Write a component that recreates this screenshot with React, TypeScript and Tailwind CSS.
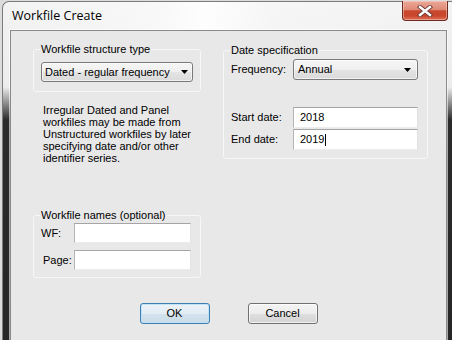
import React from "react";

function Select({ label, className = "" }: { label: string; className?: string }) {
  return (
    <div
      className={`flex items-center border border-[#7a7a7a] rounded-[3px] bg-[linear-gradient(to_bottom,#f6f6f6_0%,#efefef_50%,#e4e4e4_51%,#dadada_100%)] shadow-[inset_0_0_0_1px_rgba(255,255,255,0.6)] ${className}`}
    >
      <span className="flex-1 truncate">{label}</span>
      <svg width="7" height="4" viewBox="0 0 7 4" className="shrink-0">
        <path d="M0 0H7L3.5 4Z" fill="#000" />
      </svg>
    </div>
  );
}

function TextBox({ value, caret = false, className = "" }: { value?: string; caret?: boolean; className?: string }) {
  return (
    <div
      className={`flex items-center bg-white border-t border-l border-t-[#a5a5a5] border-l-[#b5b5b5] border-r border-b border-r-[#e2e2e2] border-b-[#ececec] ${className}`}
    >
      {value && <span>{value}</span>}
      {caret && <span className="inline-block w-[1px] h-[12px] bg-black ml-[1px]" />}
    </div>
  );
}

export default function App() {
  return (
    <div className="w-[452px] h-[340px] overflow-hidden bg-[#dcdcdc] pl-[2px] pt-[1px] font-['Liberation_Sans',Arial,sans-serif] text-[11px] text-black">
      <div className="w-[460px] h-[340px] border-l border-t border-[#7c7c7c] rounded-tl-[7px] bg-[linear-gradient(to_bottom,#f3f3f3_0px,#ececec_85px,#2b2b2b_118px,#262626_100%)] flex flex-col">
        {/* Title bar */}
        <div className="h-[28px] flex items-center pl-[9px] bg-[linear-gradient(to_right,rgba(255,255,255,0)_0%,rgba(255,255,255,0.5)_35%,rgba(255,255,255,0.9)_45%,rgba(255,255,255,0.3)_60%,rgba(255,255,255,0)_100%)] w-[449px]">
          <span className="font-['Open_Sans',sans-serif] text-[12.5px] text-black">Workfile Create</span>
          <div className="ml-auto mr-[4px] self-start -mt-[1px] w-[46px] h-[20px] rounded-b-[4px] border border-t-0 border-[#6d2a20] bg-[linear-gradient(to_bottom,#eba898_0%,#df8a76_45%,#c8472e_52%,#c9472d_78%,#e07158_100%)] shadow-[inset_0_0_0_1px_rgba(255,220,210,0.45)] flex items-center justify-center">
            <svg width="16" height="12" viewBox="0 0 16 12">
              <path d="M3 2L13 10M13 2L3 10" stroke="#6a3a33" strokeWidth="4.2" strokeLinecap="square" />
              <path d="M3 2L13 10M13 2L3 10" stroke="#ffffff" strokeWidth="2.4" strokeLinecap="square" />
            </svg>
          </div>
        </div>

        {/* Client area */}
        <div className="ml-[7px] w-[437px] flex-1 bg-[#e8e8e8] border border-[#8a8a8a] shadow-[0_0_0_1px_rgba(255,255,255,0.6)] flex flex-col">
          <div className="flex pl-[22px] pt-[11px] gap-[22px]">
            {/* Left column */}
            <div className="w-[168px] flex flex-col">
              <fieldset className="border border-[#f7f7f7] rounded-[3px] px-[7px] pb-[9px] shadow-none">
                <legend className="leading-[14px] px-[1px] -ml-[1px]">Workfile structure type</legend>
                <Select label="Dated - regular frequency" className="mt-[6px] h-[20px] pl-[3px] pr-[4px]" />
              </fieldset>

              <p className="mt-[12px] pl-[10px] leading-[12px]">
                Irregular Dated and Panel
                <br />
                workfiles may be made from
                <br />
                Unstructured workfiles by later
                <br />
                specifying date and/or other
                <br />
                identifier series.
              </p>

              <fieldset className="mt-[44px] border border-[#f7f7f7] rounded-[3px] px-[7px] pb-[7px]">
                <legend className="leading-[14px] px-[1px] -ml-[1px]">Workfile names (optional)</legend>
                <div className="mt-[1px] flex items-center">
                  <span className="w-[33px]">WF:</span>
                  <TextBox className="w-[117px] h-[20px]" />
                </div>
                <div className="mt-[7px] flex items-center">
                  <span className="w-[33px] pl-[2px]">Page:</span>
                  <TextBox className="w-[117px] h-[20px]" />
                </div>
              </fieldset>
            </div>

            {/* Right column */}
            <div className="w-[205px] mt-[1px]">
              <fieldset className="border border-[#f7f7f7] rounded-[3px] px-[7px] pb-[8px]">
                <legend className="leading-[14px] px-[1px] -ml-[1px]">Date specification</legend>
                <div className="mt-[2px] flex items-center">
                  <span className="w-[62px]">Frequency:</span>
                  <Select label="Annual" className="w-[125px] h-[21px] pl-[4px] pr-[6px]" />
                </div>
                <div className="mt-[27px] flex items-center">
                  <span className="w-[62px]">Start date:</span>
                  <TextBox value="2018" className="w-[125px] h-[21px] pl-[6px]" />
                </div>
                <div className="mt-[1px] flex items-center">
                  <span className="w-[62px]">End date:</span>
                  <TextBox value="2019" caret className="w-[125px] h-[21px] pl-[6px]" />
                </div>
              </fieldset>
            </div>
          </div>

          {/* Buttons */}
          <div className="mt-[25px] flex justify-center gap-[38px]">
            <div className="w-[70px] h-[21px] rounded-[3px] border border-[#3c7fb1] bg-[linear-gradient(to_bottom,#edf4f9_0%,#e2ecf4_50%,#d3e2ee_51%,#cadcea_100%)] shadow-[inset_0_0_0_1px_rgba(190,225,245,0.9)] flex items-center justify-center">
              OK
            </div>
            <div className="w-[70px] h-[21px] rounded-[3px] border border-[#707070] bg-[linear-gradient(to_bottom,#f4f4f4_0%,#ececec_50%,#dfdfdf_51%,#d3d3d3_100%)] shadow-[inset_0_0_0_1px_rgba(255,255,255,0.7)] flex items-center justify-center">
              Cancel
            </div>
          </div>
        </div>
      </div>
    </div>
  );
}
